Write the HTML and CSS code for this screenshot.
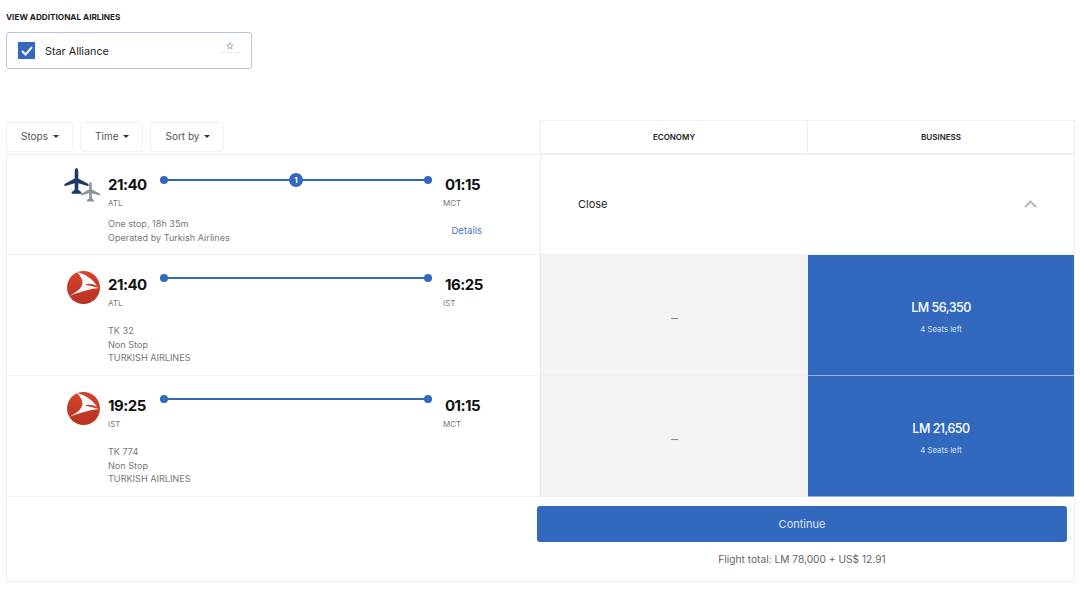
FILE: index.html
```html
<!DOCTYPE html>
<html>
	<head>
		<meta charset="utf-8">
		<title>Flights</title>
		<link rel="stylesheet" href="styles.css">
	</head>
	<body>
		<svg class="defs" width="0" height="0">
			<defs>
				<linearGradient id="tkRed" x1="0" y1="0" x2="0" y2="1">
					<stop offset="0" stop-color="#d8432c"/>
					<stop offset="1" stop-color="#b83221"/>
				</linearGradient>
			</defs>
		</svg>
		<h2 class="more-title">VIEW ADDITIONAL AIRLINES</h2>
		<label class="alliance">
			<span class="check">
				<svg width="12" height="10" viewBox="0 0 12 10"><path d="M1 5l3.5 3.5L11 1.2" fill="none" stroke="#fff" stroke-width="2"/></svg>
			</span>
			<span class="alliance-name">Star Alliance</span>
			<svg class="alliance-logo" width="20" height="12" viewBox="0 0 20 12">
				<path d="M10 .5l.9 2.400 2.400.1-1.900 1.500.7 2.400L10 5.500 7.900 6.900l.7-2.400L6.700 3l2.400-.1z" fill="none" stroke="#8f949a" stroke-width=".7"/>
				<path d="M0 10.500h6M8 10.500h5M15 10.500h5" stroke="#dcdee0" stroke-width=".7"/>
			</svg>
		</label>

		<div class="toolbar">
			<div class="filters">
				<button class="filter">Stops<i class="caret"></i></button>
				<button class="filter">Time<i class="caret"></i></button>
				<button class="filter">Sort by<i class="caret"></i></button>
			</div>
			<div class="cabins">
				<div class="cabin">ECONOMY</div>
				<div class="cabin">BUSINESS</div>
			</div>
		</div>

		<div class="results">
			<div class="row row-summary">
				<div class="flight">
					<div class="logo">
						<svg width="37" height="38" viewBox="0 0 37 38">
							<path fill="#8a929c" d="M26.500 14c.8 0 1.300 1 1.300 3v4.500l8.200 4.300v1.700l-8.200-2.200v5l2.200 1.700v1.400h-3.500-3.500V32l2.200-1.700v-5L17 27.500v-1.700l8.200-4.300V17c0-2 .5-3 1.300-3z"/>
							<path fill="#1d3a66" d="M12.500 0c1 0 1.800 1.500 1.800 4v6.500L24.500 16v2.300l-10.200-3v6.500l3 2.300v1.700h-4.800-4.800v-1.700l3-2.300v-6.500L.5 18.300V16l10.200-5.500V4c0-2.500.8-4 1.800-4z"/>
						</svg>
					</div>
					<div class="times">
						<div class="stop-col">
							<div class="time">21:40</div>
							<div class="code">ATL</div>
						</div>
						<div class="track">
							<span class="stop-badge">1</span>
						</div>
						<div class="stop-col stop-end">
							<div class="time">01:15</div>
							<div class="code">MCT</div>
						</div>
					</div>
					<div class="info info-summary">
						<div>
							<div>One stop, 18h 35m</div>
							<div>Operated by Turkish Airlines</div>
						</div>
						<a class="details" href="#">Details</a>
					</div>
				</div>
				<div class="close-cell">
					<span>Close</span>
					<svg width="13" height="8" viewBox="0 0 13 8"><path d="M1 7l5.500-5.500L12 7" fill="none" stroke="#b4b7bb" stroke-width="2"/></svg>
				</div>
			</div>

			<div class="row row-leg">
				<div class="flight">
					<div class="logo">
						<svg width="33" height="33" viewBox="0 0 33 33">
							<circle cx="16.500" cy="16.500" r="16.500" fill="url(#tkRed)"/>
							<path fill="#fff" d="M10 1c8 2 16 7 20 14-4-2-9-3-12-1.500L32 17C22 18 12 21 2 25c8-4 13-8 13.500-13C15.500 8 13 4 10 1z"/>
						</svg>
					</div>
					<div class="times">
						<div class="stop-col">
							<div class="time">21:40</div>
							<div class="code">ATL</div>
						</div>
						<div class="track"></div>
						<div class="stop-col stop-end">
							<div class="time">16:25</div>
							<div class="code">IST</div>
						</div>
					</div>
					<div class="info">
						<div>TK 32</div>
						<div>Non Stop</div>
						<div>TURKISH AIRLINES</div>
					</div>
				</div>
				<div class="fare fare-none">&ndash;</div>
				<div class="fare fare-pick">
					<div class="price">LM 56,350</div>
					<div class="seats">4 Seats left</div>
				</div>
			</div>

			<div class="row row-leg">
				<div class="flight">
					<div class="logo">
						<svg width="33" height="33" viewBox="0 0 33 33">
							<circle cx="16.500" cy="16.500" r="16.500" fill="url(#tkRed)"/>
							<path fill="#fff" d="M10 1c8 2 16 7 20 14-4-2-9-3-12-1.500L32 17C22 18 12 21 2 25c8-4 13-8 13.500-13C15.500 8 13 4 10 1z"/>
						</svg>
					</div>
					<div class="times">
						<div class="stop-col">
							<div class="time">19:25</div>
							<div class="code">IST</div>
						</div>
						<div class="track"></div>
						<div class="stop-col stop-end">
							<div class="time">01:15</div>
							<div class="code">MCT</div>
						</div>
					</div>
					<div class="info">
						<div>TK 774</div>
						<div>Non Stop</div>
						<div>TURKISH AIRLINES</div>
					</div>
				</div>
				<div class="fare fare-none">&ndash;</div>
				<div class="fare fare-pick">
					<div class="price">LM 21,650</div>
					<div class="seats">4 Seats left</div>
				</div>
			</div>

			<div class="footer">
				<button class="continue">Continue</button>
				<div class="total">Flight total: LM 78,000 + US$ 12.91</div>
			</div>
		</div>
	</body>
</html>
```

FILE: styles.css
```css
* {
	box-sizing: border-box;
}

html,
body {
	margin: 0;
	padding: 0;
}

body {
	width: 1080px;
	height: 589px;
	padding: 12px 5px 0 6px;
	overflow: hidden;
	background: #fff;
	color: #111;
	font-family: Inter, "Liberation Sans", sans-serif;
}

.defs {
	display: block;
}

.more-title {
	margin: 0;
	font-size: 8.200px;
	line-height: 10px;
	font-weight: 700;
	color: #1c1c1c;
}

.alliance {
	display: flex;
	align-items: center;
	width: 246px;
	height: 37px;
	margin-top: 10px;
	padding: 0 11px 0 11px;
	border: 1px solid #b4c4e2;
	border-radius: 3px;
}

.check {
	display: flex;
	align-items: center;
	justify-content: center;
	width: 17px;
	height: 17px;
	background: #3269bf;
}

.alliance-name {
	flex: 1;
	margin-left: 10px;
	padding-top: 2px;
	font-size: 10.800px;
	color: #1e1e1e;
}

.alliance-logo {
	margin-bottom: 5px;
}

.toolbar {
	display: flex;
	align-items: flex-end;
	height: 35px;
	margin-top: 51px;
}

.filters {
	display: flex;
	gap: 7px;
	width: 534px;
	padding-bottom: 2px;
	border-bottom: 1px solid #eeeff0;
}

.filter {
	display: flex;
	align-items: center;
	justify-content: center;
	height: 30px;
	padding: 0 13px 2px 14px;
	border: 1px solid #f0f1f2;
	border-radius: 3px;
	background: #fff;
	color: #555;
	font: 400 10px Inter, "Liberation Sans", sans-serif;
}

.caret {
	width: 0;
	height: 0;
	margin-left: 5px;
	border-top: 3px solid #333;
	border-left: 3px solid transparent;
	border-right: 3px solid transparent;
}

.cabins {
	display: flex;
	width: 535px;
	height: 35px;
	border: 1px solid #eeeff0;
	border-bottom: 2px solid #eeeff0;
}

.cabin {
	display: flex;
	flex: 1;
	align-items: center;
	justify-content: center;
	font-size: 8px;
	font-weight: 600;
	color: #222;
}

.cabin:first-child {
	border-right: 1px solid #eeeff0;
}

.results {
	border: 1px solid #eeeff0;
	border-top: 0;
}

.row {
	display: flex;
	border-bottom: 1px solid #eeeff0;
}

.row-summary {
	height: 100px;
}

.row-leg {
	height: 121px;
}

.flight {
	display: grid;
	grid-template-columns: 101px 1fr;
	align-content: start;
	width: 533px;
	padding-right: 58px;
}

.row-leg .flight {
	padding-top: 15px;
}

.row-summary .flight {
	padding-top: 13px;
}

.logo {
	grid-row: span 2;
	display: flex;
	justify-content: flex-end;
	align-items: flex-start;
	padding-right: 8px;
}

.row-leg .logo {
	padding-top: 1px;
}

.row-summary .logo {
	padding-right: 7px;
}

.times {
	display: flex;
}

.row-summary .times {
	margin-top: 4px;
}

.stop-col {
	width: 50px;
	flex: none;
	padding-top: 5px;
}

.row-summary .stop-col {
	padding-top: 3px;
}

.stop-end {
	width: 37px;
	margin-left: 2px;
}

.stop-end .code {
	margin-left: -2px;
}

.time {
	font-size: 15px;
	line-height: 20px;
	font-weight: 700;
	letter-spacing: -0.5px;
	color: #111;
}

.code {
	margin-top: 3px;
	font-size: 8px;
	line-height: 10px;
	color: #777;
}

.track {
	position: relative;
	flex: 1;
	height: 2px;
	margin: 7px 11px 0 2px;
	background: #3269bf;
}

.track::before,
.track::after {
	content: "";
	position: absolute;
	top: -3px;
	width: 8px;
	height: 8px;
	border-radius: 50%;
	background: #3269bf;
}

.track::before {
	left: 0;
}

.track::after {
	right: 0;
}

.stop-badge {
	position: absolute;
	top: -6px;
	left: 129px;
	width: 14px;
	height: 14px;
	border-radius: 50%;
	background: #3269bf;
	color: #fff;
	font-size: 8px;
	font-weight: 700;
	line-height: 14px;
	text-align: center;
}

.info {
	grid-column: 2;
	margin-top: 16px;
	font-size: 9.100px;
	line-height: 13.500px;
	color: #777;
}

.info-summary {
	display: flex;
	align-items: center;
	justify-content: space-between;
	margin-top: 9px;
}

.details {
	color: #4a76c2;
	font-size: 9.500px;
	text-decoration: none;
}

.close-cell {
	display: flex;
	flex: 1;
	align-items: center;
	justify-content: space-between;
	padding: 0 37px 2px;
	border-left: 1px solid #eeeff0;
	font-size: 11px;
	color: #222;
}

.fare {
	display: flex;
	flex-direction: column;
	align-items: center;
	justify-content: center;
}

.fare-none {
	width: 268px;
	padding-top: 5px;
	border-left: 1px solid #e6e7e9;
	background: #f2f3f5;
	color: #888;
	font-size: 13px;
}

.fare-pick {
	flex: 1;
	margin-bottom: -1px;
	padding-top: 3px;
	border-bottom: 1px solid #8fb0e0;
	background: #3269bf;
	color: #fff;
}

.price {
	font-size: 12.500px;
	font-weight: 500;
	letter-spacing: -0.5px;
	line-height: 16px;
}

.seats {
	margin-top: 8px;
	font-size: 7.800px;
	line-height: 10px;
	color: #d5e0f3;
}

.footer {
	display: flex;
	flex-direction: column;
	align-items: flex-end;
	height: 84px;
	padding: 9px 7px 0 0;
}

.continue {
	width: 530px;
	height: 36px;
	border: 0;
	border-radius: 3px;
	background: #3269bf;
	color: #dbe6f7;
	font: 400 11px Inter, "Liberation Sans", sans-serif;
}

.total {
	width: 530px;
	margin-top: 10px;
	font-size: 10.200px;
	line-height: 14px;
	text-align: center;
	color: #666;
}
```
